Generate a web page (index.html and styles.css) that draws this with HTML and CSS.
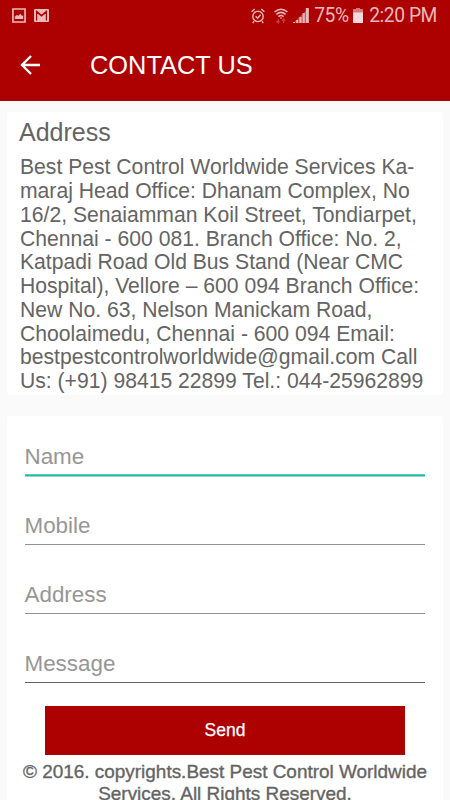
FILE: index.html
```html
<!DOCTYPE html>
<html lang="en">
<head>
<meta charset="utf-8">
<title>Contact Us</title>
<link rel="stylesheet" href="styles.css">
</head>
<body>
<header class="header">
  <div class="status">
    <div class="status-left">
      <svg width="14" height="15" viewBox="0 0 15 16"><path d="M1 1h13v14H1z" fill="none" stroke="currentColor" stroke-width="1.8"/><path d="M3 11.8V9l2.2-1.5 1.6.9L9 6l1.5 2.4L12 8v3.8z" fill="currentColor"/></svg>
      <svg width="15" height="13" viewBox="0 0 15 13"><rect width="15" height="13" rx="1" fill="currentColor"/><path d="M2.6 11.5V3l4.9 4L12.4 3v8.5M2 1.8l5.5 4.6L13 1.8" fill="none" stroke="#ad0000" stroke-width="1.2"/></svg>
    </div>
    <div class="status-right">
      <svg class="alarm" width="14" height="16" viewBox="0 0 14 16" fill="none" stroke="currentColor" stroke-width="1.4"><circle cx="7" cy="8.4" r="5.2"/><path d="M.6 3.8 3.7 1M13.4 3.8 10.3 1M3 13l-1.2 2.2M11 13l1.2 2.2M4.6 8.2l2 2 3-3.4"/></svg>
      <svg class="wifi" width="14" height="16" viewBox="0 0 14 16" fill="none" stroke="currentColor" stroke-width="1.5"><path d="M.5 4q6.5-5.6 13 0M2.4 6.4q4.6-4 9.2 0M4.4 8.6q2.6-2.2 5.2 0"/><path d="M5.6 9.4 7 11l1.4-1.6z" fill="currentColor" stroke="none"/><path d="M4.2 15v-4M2.5 13l1.7 2 1.5-2M9.7 11v4M8 13l1.7-2 1.6 2" opacity=".35" stroke-width="1.2"/></svg>
      <svg class="signal" width="16" height="15" viewBox="0 0 16 15" fill="currentColor"><path d="M0 14h2v1H0zM3.2 12h2v3h-2zM6.4 9h2.2v6H6.4zM9.6 5h2.2v10H9.6zM12.8 0H15.8v15h-3z"/><path d="M0 15 15.8 0v15z" opacity=".35"/></svg>
      <span class="percent">75%</span>
      <svg class="battery" width="10" height="15" viewBox="0 0 10 15"><path d="M3 0h4v1h3v4H0V1h3z" fill="#d57a7a"/><path d="M0 4.5h10V15H0z" fill="#f3d9d9"/></svg>
      <span class="clock">2:20 PM</span>
    </div>
  </div>
  <div class="toolbar">
    <svg class="back" width="20" height="20" viewBox="0 0 20 20" fill="none" stroke="#fff" stroke-width="2.4"><path d="M20 10H2M11 1l-9 9 9 9"/></svg>
    <h1 class="title">CONTACT US</h1>
  </div>
</header>
<main class="content">
  <section class="card address">
    <h2 class="heading">Address</h2>
    <p class="details">Best Pest Control Worldwide Services Ka-<br>maraj Head Office: Dhanam Complex, No<br>16/2, Senaiamman Koil Street, Tondiarpet,<br>Chennai - 600 081. Branch Office: No. 2,<br>Katpadi Road Old Bus Stand (Near CMC<br>Hospital), Vellore – 600 094 Branch Office:<br>New No. 63, Nelson Manickam Road,<br>Choolaimedu, Chennai - 600 094 Email:<br>bestpestcontrolworldwide@gmail.com Call<br>Us: (+91) 98415 22899 Tel.: 044-25962899</p>
  </section>
  <section class="card form">
    <div class="field focused">Name</div>
    <div class="field">Mobile</div>
    <div class="field">Address</div>
    <div class="field last">Message</div>
    <button class="send" type="button">Send</button>
    <p class="copyright">© 2016. copyrights.Best Pest Control Worldwide<br>Services. All Rights Reserved.</p>
  </section>
</main>
</body>
</html>
```
FILE: styles.css
```css
* { box-sizing: border-box; }
html, body { height: 100%; }
body {
  margin: 0;
  height: 800px;
  overflow: hidden;
  display: flex;
  flex-direction: column;
  background: #fafafa;
  color: #646464;
  font-family: "Liberation Sans", Arial, sans-serif;
}
h1, h2, p { margin: 0; font-weight: 400; white-space: nowrap; }
svg { display: block; flex: none; }

.header { flex: none; height: 101px; background: #ad0000; color: #fff; }
.status {
  height: 32px;
  padding: 0 13px 0 12px;
  display: flex;
  justify-content: space-between;
  align-items: center;
  color: #eab9b9;
}
.status-left { display: flex; align-items: center; gap: 8px; margin-top: -1px; }
.status-right { display: flex; align-items: center; font: 19.3px/32px Roboto, sans-serif; letter-spacing: -0.45px; }
.alarm, .wifi, .signal, .battery { margin-top: -1px; }
.wifi { margin-left: 9px; }
.signal { margin-left: 5px; }
.percent { margin-left: 5px; }
.battery { margin-left: 4.5px; }
.clock { margin-left: 6px; }
.toolbar { height: 69px; padding: 0 20px; display: flex; align-items: center; }
.back { margin-top: -3px; }
.title { margin: -3px 0 0 50px; font-size: 25.4px; line-height: 30px; }

.content { flex: none; padding: 11px 7px 0; display: flex; flex-direction: column; gap: 21px; }
.card { background: #fff; border-radius: 3px; }
.address { height: 283px; padding: 5px 12px 0; }
.heading { font-size: 25px; line-height: 30px; }
.details { margin-top: 8.4px; padding-left: 1px; font-size: 21.15px; line-height: 23.75px; }

.form { height: 420px; padding: 25px 18px 0; display: flex; flex-direction: column; }
.field {
  height: 35px;
  margin-bottom: 34.2px;
  flex: none;
  border-bottom: 1.5px solid #929292;
  color: #969696;
  font-size: 22.4px;
  line-height: 32px;
  text-indent: -0.5px;
}
.focused { height: 36px; margin-bottom: 33px; border: 0; box-shadow: inset 0 -1px #8edbd0, inset 0 -2px #1dbca6, inset 0 -3px #5fcbbc; }
.last { margin-bottom: 23px; border-color: #626262; }
.send {
  flex: none;
  height: 49px;
  margin: 0 20px 0 20px;
  border: 0;
  padding: 0;
  background: #ad0000;
  color: #fff;
  font: 17.5px "Liberation Sans", Arial, sans-serif;
  -webkit-text-stroke: 0.25px #fff;
}
.copyright {
  align-self: center;
  margin-top: 6px;
  font-size: 18.95px;
  line-height: 21.4px;
  text-align: center;
  -webkit-text-stroke: 0.35px #646464;
}
```
